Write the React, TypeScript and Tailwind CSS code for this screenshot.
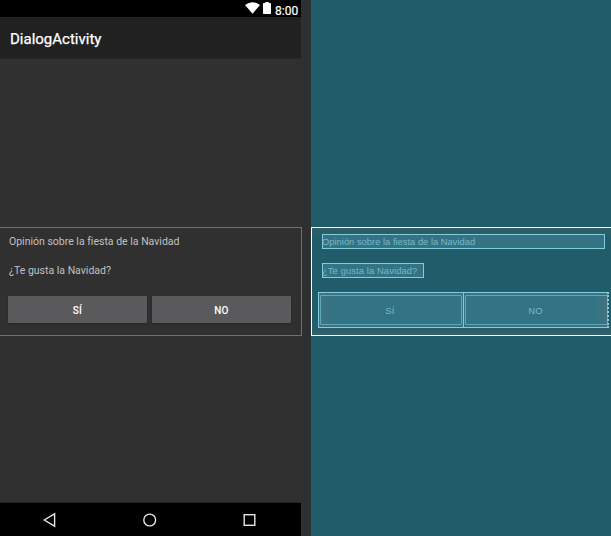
import React from 'react';

function PreviewButton({ label }: { label: string }) {
  return (
    <div className="flex h-[27px] w-[139px] items-center justify-center rounded-[1px] bg-[#5a5a5c] pt-px text-[10px] font-medium tracking-[0.3px] text-white shadow-[0_1px_2px_rgba(0,0,0,0.2)]">
      {label}
    </div>
  );
}

function StatusBar() {
  return (
    <div className="flex h-[17px] shrink-0 items-start justify-end bg-black pr-[4px] text-white">
      <svg className="mt-[2px] h-3 w-[15px]" viewBox="0 0 15 12" fill="currentColor">
        <path d="M0 3.1Q7.5-2.7 15 3.1L7.5 11.8Z" />
      </svg>
      <svg className="mt-[2px] ml-[3px] h-3 w-2" viewBox="0 0 8 12" fill="currentColor">
        <path d="M2.2 0h3.6v1H7.3q.7 0 .7.7v9.6q0 .7-.7.7H.7Q0 12 0 11.3V1.7Q0 1 .7 1h1.5Z" />
      </svg>
      <span className="mt-[4px] ml-1 w-[22px] text-[12px] leading-[14px] whitespace-nowrap [-webkit-text-stroke:0.2px_white]">8:00</span>
    </div>
  );
}

function DesignPreview() {
  return (
    <section className="flex w-[301px] shrink-0 flex-col bg-[#303030] font-['Roboto',sans-serif] [font-variant-ligatures:none]">
      <StatusBar />
      <header className="flex h-[42px] shrink-0 items-center border-b border-[#292929] bg-[#212121] pt-[3px] pl-[10px] text-[15px] text-white [-webkit-text-stroke:0.25px_white]">
        DialogActivity
      </header>
      <div className="h-[168px] shrink-0" />
      <div className="h-[109px] w-[302px] shrink-0 border-y border-r border-[#2481dc] pt-[6px] text-[10.5px] text-[#c1c1c1]">
        <p className="h-[15px] pl-[9px] leading-[15px] whitespace-nowrap">Opinión sobre la fiesta de la Navidad</p>
        <p className="mt-[14px] h-[15px] pl-[9px] leading-[15px] whitespace-nowrap">¿Te gusta la Navidad?</p>
        <div className="mt-[18px] flex gap-[5px] pl-2">
          <PreviewButton label="SÍ" />
          <PreviewButton label="NO" />
        </div>
      </div>
      <div className="grow border-b border-[#222]" />
      <nav className="flex h-[33px] shrink-0 items-center bg-black pt-px pl-[43px]">
        <svg className="h-4 w-[215px]" viewBox="0 0 215 16" fill="none" stroke="#e4e4e4" strokeWidth="1.4">
          <path d="M1.2 8 11.6 1.8v12.4Z" />
          <circle cx="106.7" cy="8" r="5.9" />
          <rect x="201.2" y="2.7" width="10.6" height="10.6" />
        </svg>
      </nav>
    </section>
  );
}

function BlueprintButton({ label, extra }: { label: string; extra: string }) {
  return (
    <div className={`h-9 w-[145px] border-y border-l border-[#81cde0] bg-[#347384] py-[2px] pl-px ${extra}`}>
      <div className="flex h-full items-center justify-center rounded-[1px] border border-[#5fa8ba] pt-[2px] pr-[2px] text-[9.5px] tracking-[0.2px]">{label}</div>
    </div>
  );
}

function Blueprint() {
  return (
    <section className="w-[300px] shrink-0 overflow-hidden bg-[#215c6b] pt-[227px] font-['Liberation_Sans',sans-serif] [font-variant-ligatures:none]">
      <div className="h-[109px] border-y border-l border-white bg-[linear-gradient(#315f69,#215c6b_12px,#215c6b_90px,#315f69)] pt-[6px] text-[9.4px] text-[#75b9ca]">
        <p className="ml-[10px] h-[15px] w-[283px] border border-[#81cde0] bg-[#347384] indent-[-1px] leading-[14px] whitespace-nowrap">Opinión sobre la fiesta de la Navidad</p>
        <p className="mt-[14px] ml-[10px] h-[15px] w-[102px] border border-[#81cde0] bg-[#347384] indent-[-1px] leading-[14px] tracking-[0.1px] whitespace-nowrap">¿Te gusta la Navidad?</p>
        <div className="mt-[14px] ml-[6px] flex">
          <BlueprintButton label="SÍ" extra="pr-px bg-[linear-gradient(90deg,#46737d,#347384_12px)]" />
          <BlueprintButton label="NO" extra="bg-[linear-gradient(270deg,#46737d,#347384_12px)]" />
          <div className="-ml-px h-9 border-l-2 border-dotted border-[#81cde0]" />
        </div>
      </div>
    </section>
  );
}

export default function App() {
  return (
    <main className="flex h-[536px] w-[611px] overflow-hidden bg-[#2d2f31]">
      <DesignPreview />
      <div className="w-[10px] shrink-0" />
      <Blueprint />
    </main>
  );
}
